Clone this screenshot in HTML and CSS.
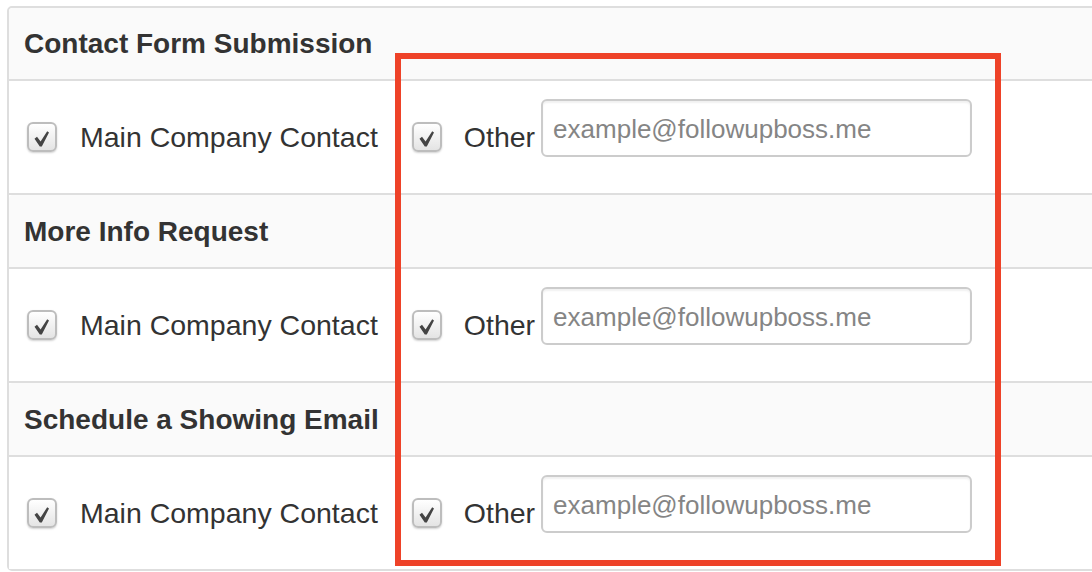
FILE: index.html
```html
<!DOCTYPE html>
<html>
<head>
<meta charset="utf-8">
<link rel="stylesheet" href="styles.css">
</head>
<body>
<div class="page">
  <div class="panel">
    <div class="section-head first">Contact Form Submission</div>
    <div class="section-body">
      <label class="opt main">
        <span class="cb"><svg viewBox="2 2 26 26" width="26" height="26"><path d="M7.5 16.8 L10 14.8 L13.6 19.4 L20.2 9.2 L22 10.4 L14.8 24.4 L12.8 24.4 Z" fill="#444"/></svg></span>
        <span class="opt-text">Main Company Contact</span>
      </label>
      <label class="opt other">
        <span class="cb"><svg viewBox="2 2 26 26" width="26" height="26"><path d="M7.5 16.8 L10 14.8 L13.6 19.4 L20.2 9.2 L22 10.4 L14.8 24.4 L12.8 24.4 Z" fill="#444"/></svg></span>
        <span class="opt-text">Other</span>
      </label>
      <input class="email" type="text" placeholder="example@followupboss.me">
    </div>
    <div class="section-head">More Info Request</div>
    <div class="section-body">
      <label class="opt main">
        <span class="cb"><svg viewBox="2 2 26 26" width="26" height="26"><path d="M7.5 16.8 L10 14.8 L13.6 19.4 L20.2 9.2 L22 10.4 L14.8 24.4 L12.8 24.4 Z" fill="#444"/></svg></span>
        <span class="opt-text">Main Company Contact</span>
      </label>
      <label class="opt other">
        <span class="cb"><svg viewBox="2 2 26 26" width="26" height="26"><path d="M7.5 16.8 L10 14.8 L13.6 19.4 L20.2 9.2 L22 10.4 L14.8 24.4 L12.8 24.4 Z" fill="#444"/></svg></span>
        <span class="opt-text">Other</span>
      </label>
      <input class="email" type="text" placeholder="example@followupboss.me">
    </div>
    <div class="section-head">Schedule a Showing Email</div>
    <div class="section-body">
      <label class="opt main">
        <span class="cb"><svg viewBox="2 2 26 26" width="26" height="26"><path d="M7.5 16.8 L10 14.8 L13.6 19.4 L20.2 9.2 L22 10.4 L14.8 24.4 L12.8 24.4 Z" fill="#444"/></svg></span>
        <span class="opt-text">Main Company Contact</span>
      </label>
      <label class="opt other">
        <span class="cb"><svg viewBox="2 2 26 26" width="26" height="26"><path d="M7.5 16.8 L10 14.8 L13.6 19.4 L20.2 9.2 L22 10.4 L14.8 24.4 L12.8 24.4 Z" fill="#444"/></svg></span>
        <span class="opt-text">Other</span>
      </label>
      <input class="email" type="text" placeholder="example@followupboss.me">
    </div>
  </div>
  <div class="highlight"></div>
</div>
</body>
</html>
```

FILE: styles.css
```css
html, body {
  margin: 0;
  padding: 0;
  background: #fff;
  overflow: hidden;
}
body {
  width: 1092px;
  height: 572px;
  font-family: "Liberation Sans", Arial, sans-serif;
  color: #333;
}
.page {
  position: relative;
  width: 1092px;
  height: 572px;
  overflow: hidden;
}
.panel {
  margin: 6px 0 0 7px;
  width: 1200px;
  border: 2px solid #dedede;
  border-radius: 5px;
  background: #fff;
}
.section-head {
  display: flex;
  align-items: center;
  padding-left: 15px;
  padding-top: 2px;
  box-sizing: border-box;
  background: #fafafa;
  border-bottom: 2px solid #dedede;
  font-size: 28px;
  font-weight: bold;
  color: #333;
  border-radius: 4px 4px 0 0;
  height: 74px;
}
.section-head.first {
  height: 73px;
  padding-top: 1px;
}
.section-body {
  height: 112px;
  display: flex;
  align-items: center;
  padding-left: 18px;
  border-bottom: 2px solid #dedede;
  background: #fff;
}
.section-body:last-child {
  border-bottom: none;
}
.opt {
  display: flex;
  align-items: center;
  font-size: 28.5px;
  color: #333;
  flex-shrink: 0;
}
.opt.main {
  gap: 23px;
  margin-right: 34px;
}
.opt.other {
  gap: 22px;
  margin-right: 6px;
}
.cb {
  flex: 0 0 30px;
  width: 30px;
  height: 30px;
  box-sizing: border-box;
  border: 2px solid #bdbdbd;
  border-radius: 6px;
  background: linear-gradient(#ffffff, #e4e4e4);
  box-shadow: 0 1px 2px rgba(0, 0, 0, 0.18);
  display: block;
}
.cb svg {
  display: block;
}
.opt-text {
  line-height: 32px;
}
.email {
  flex-shrink: 0;
  box-sizing: border-box;
  width: 431px;
  height: 58px;
  margin-bottom: 18px;
  border: 2px solid #cccccc;
  border-radius: 6px;
  box-shadow: inset 0 2px 2px rgba(0, 0, 0, 0.06);
  padding: 13px 10px 11px 10px;
  font-family: "Liberation Sans", Arial, sans-serif;
  font-size: 26px;
  line-height: 30px;
  color: #555;
  background: #fff;
  outline: none;
}
.email::placeholder {
  color: #858585;
  opacity: 1;
}
.highlight {
  position: absolute;
  left: 395px;
  top: 53px;
  width: 606px;
  height: 513px;
  box-sizing: border-box;
  border: 6px solid #ee4228;
  pointer-events: none;
}
```
